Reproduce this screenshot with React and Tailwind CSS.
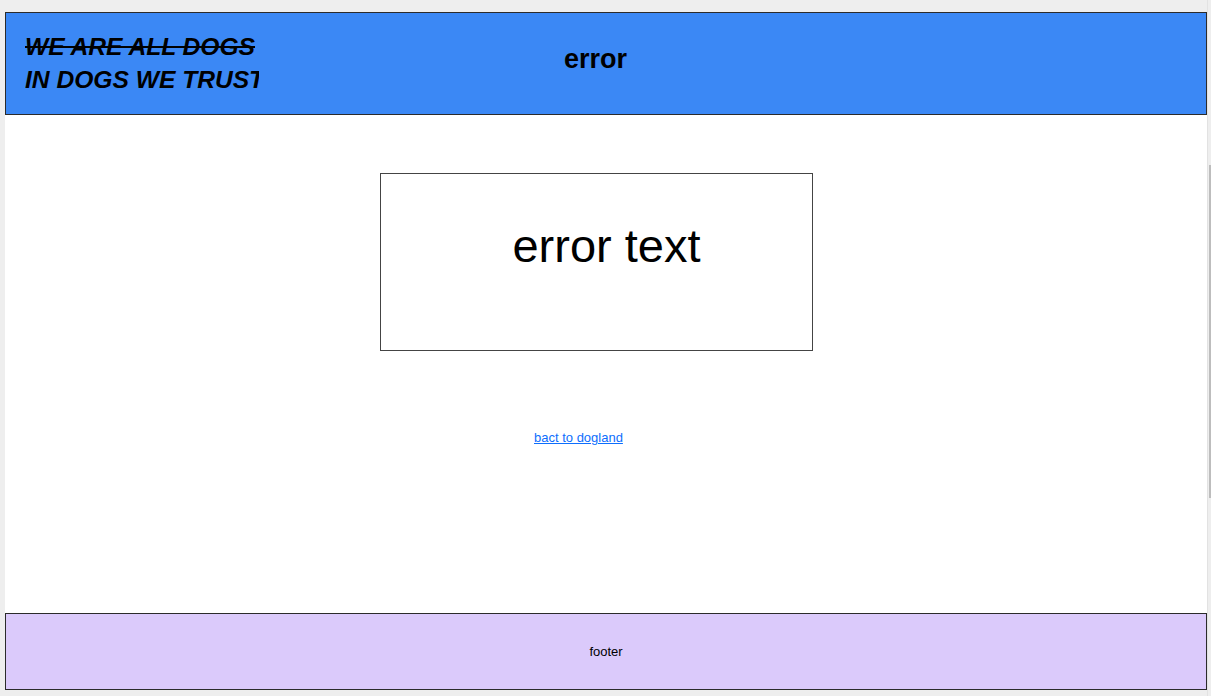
export default function App() {
  return (
    <div className="flex h-[696px] w-[1211px] overflow-hidden bg-[#eeeeee] font-['Liberation_Sans',Arial,sans-serif] text-black">

      {/* Page */}

      <div className="ml-[5px] mt-3 flex w-[1202px] flex-col">

        {/* Header */}

        <header className="flex h-[103px] items-center border border-[#2b2b2b] bg-[#3b88f5] pl-[19px]">
          <div className="mb-[2px] w-[234px] overflow-hidden whitespace-nowrap text-[24.6px] font-bold italic leading-[33px]">
            <p className="line-through">WE ARE ALL DOGS</p>
            <p>IN DOGS WE TRUST</p>
          </div>

          <h1 className="mb-[8px] ml-[305px] text-[27px] font-bold">
            error
          </h1>
        </header>

        {/* Main */}

        <main className="flex h-[498px] flex-col bg-white">
          <div className="ml-[375px] mt-[58px] h-[178px] w-[433px] border border-[#444] pl-[20px] pt-[45px] text-center">
            <h2 className="text-[47px] leading-[54px]">error text</h2>
          </div>

          <a
            href="#"
            className="ml-[529px] mt-[79px] w-fit text-[13px] leading-[15px] text-[#0d6efd] underline"
          >
            bact to dogland
          </a>
        </main>

        {/* Footer */}

        <footer className="flex h-[77px] items-center justify-center border border-[#2b2b2b] bg-[#dbcafb] text-[13px] leading-[15px]">
          footer
        </footer>

      </div>

      {/* Scrollbar */}

      <div className="flex w-[4px] border-l border-[#e2e2e2]">
        <div className="ml-[1px] mt-[165px] h-[333px] w-[2px] bg-[#bdbdbd]" />
      </div>

    </div>
  )
}
